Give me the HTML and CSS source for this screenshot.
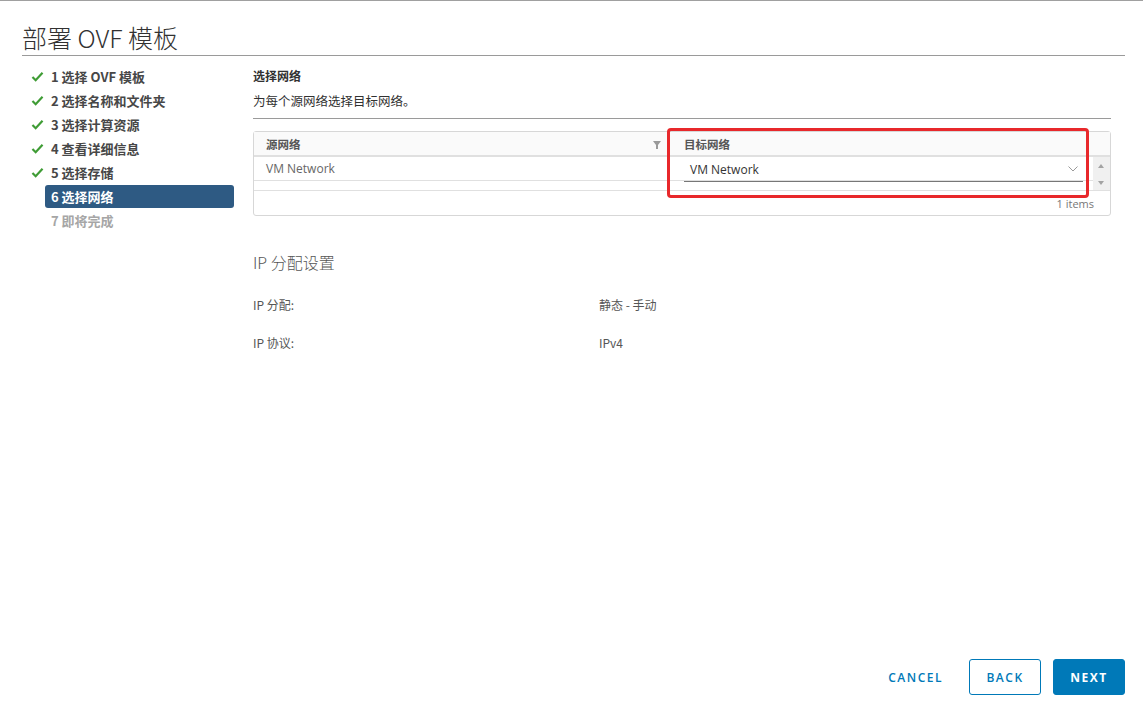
FILE: index.html
```html
<!DOCTYPE html>
<html lang="zh">
<head>
<meta charset="utf-8">
<link rel="stylesheet" href="styles.css">
</head>
<body>
<div class="dialog">
  <header class="title-bar"><h1>部署 OVF 模板</h1></header>
  <div class="body">
    <nav class="steps">
      <div class="step done"><svg class="chk" viewBox="0 0 14 12"><path d="M1.5 6.5 L5 10 L12.5 2" fill="none" stroke="#3f9c35" stroke-width="2.4"/></svg><span>1 选择 OVF 模板</span></div>
      <div class="step done"><svg class="chk" viewBox="0 0 14 12"><path d="M1.5 6.5 L5 10 L12.5 2" fill="none" stroke="#3f9c35" stroke-width="2.4"/></svg><span>2 选择名称和文件夹</span></div>
      <div class="step done"><svg class="chk" viewBox="0 0 14 12"><path d="M1.5 6.5 L5 10 L12.5 2" fill="none" stroke="#3f9c35" stroke-width="2.4"/></svg><span>3 选择计算资源</span></div>
      <div class="step done"><svg class="chk" viewBox="0 0 14 12"><path d="M1.5 6.5 L5 10 L12.5 2" fill="none" stroke="#3f9c35" stroke-width="2.4"/></svg><span>4 查看详细信息</span></div>
      <div class="step done"><svg class="chk" viewBox="0 0 14 12"><path d="M1.5 6.5 L5 10 L12.5 2" fill="none" stroke="#3f9c35" stroke-width="2.4"/></svg><span>5 选择存储</span></div>
      <div class="step active"><span>6 选择网络</span></div>
      <div class="step todo"><span>7 即将完成</span></div>
    </nav>
    <main class="content">
      <div class="sec-head">
        <div class="sec-title">选择网络</div>
        <div class="sec-desc">为每个源网络选择目标网络。</div>
      </div>
      <div class="grid-wrap">
        <div class="grid">
          <div class="grid-head">
            <div class="col col-src">源网络<svg class="filter" viewBox="0 0 8 8"><path d="M0 0 H8 L5 4 V8 H3 V4 Z" fill="#9a9a9a"/></svg></div>
            <div class="col col-dst">目标网络</div>
          </div>
          <div class="grid-bodywrap">
            <div class="grid-rows">
              <div class="grid-row">
                <div class="col col-src cell">VM Network</div>
                <div class="col col-dst cell">
                  <div class="select"><span>VM Network</span><svg class="caret" viewBox="0 0 10 6"><path d="M0.5 0.5 L5 5 L9.5 0.5" fill="none" stroke="#9a9a9a" stroke-width="1"/></svg></div>
                </div>
              </div>
              <div class="grid-spacer"></div>
            </div>
            <div class="scrollbar"><span class="arrow up"></span><span class="arrow down"></span></div>
          </div>
          <div class="grid-foot">1 items</div>
        </div>
        <div class="highlight"></div>
      </div>
      <h2 class="ip-title">IP 分配设置</h2>
      <div class="kv">
        <div class="k">IP 分配:</div><div class="v">静态 - 手动</div>
        <div class="k">IP 协议:</div><div class="v">IPv4</div>
      </div>
    </main>
  </div>
  <footer class="actions">
    <button class="btn btn-link">CANCEL</button>
    <button class="btn btn-outline">BACK</button>
    <button class="btn btn-primary">NEXT</button>
  </footer>
</div>
</body>
</html>
```
FILE: styles.css
```css
* { box-sizing: border-box; }
html, body { margin: 0; padding: 0; }
body {
  width: 1143px;
  height: 713px;
  overflow: hidden;
  background: #fff;
  font-family: "Noto Sans CJK SC", "Open Sans", sans-serif;
  color: #565656;
}
.dialog {
  width: 1143px;
  height: 713px;
  border-top: 1px solid #a0a0a0;
  display: flex;
  flex-direction: column;
  padding: 0 18px 0 22px;
}
.title-bar {
  border-bottom: 1px solid #9a9a9a;
  padding-top: 20px;
  height: 55px;
}
.title-bar h1 {
  margin: 0;
  font-weight: 300;
  font-size: 25px;
  line-height: 32px;
  color: #313131;
  font-family: "Noto Sans CJK SC", "Open Sans", sans-serif;
}
.body {
  display: flex;
  flex: 1;
  padding-top: 8px;
}
.steps {
  width: 212px;
  padding-left: 8px;
  display: flex;
  flex-direction: column;
}
.step {
  height: 24px;
  display: flex;
  align-items: center;
  font-size: 13px;
  font-weight: 700;
  color: #474747;
  padding-left: 21px;
  position: relative;
}
.step.done .chk {
  position: absolute;
  left: 1px;
  top: 7px;
  width: 13px;
  height: 11px;
}
.step.active {
  background: #2e5a83;
  color: #fff;
  border-radius: 3px;
  margin-left: 15px;
  padding-left: 6px;
  height: 23px;
  margin-top: 1px;
  width: 189px;
}
.step.todo { color: #a6a6a6; }
.content {
  flex: 1;
  padding-left: 19px;
  padding-right: 14px;
}
.sec-head {
  border-bottom: 1px solid #9a9a9a;
  padding-top: 3px;
  height: 55px;
}
.sec-title {
  font-size: 12px;
  font-weight: 700;
  color: #313131;
  line-height: 18px;
}
.sec-desc {
  font-size: 12.5px;
  color: #313131;
  line-height: 18px;
  margin-top: 7px;
}
.grid-wrap {
  position: relative;
  margin-top: 12px;
}
.grid {
  border: 1px solid #d7d7d7;
  border-radius: 3px;
  height: 85px;
  display: flex;
  flex-direction: column;
}
.grid-head {
  display: flex;
  height: 25px;
  background: #fafafa;
  border-bottom: 2px solid #e0e0e0;
}
.col {
  font-size: 12px;
  display: flex;
  align-items: center;
}
.grid-head .col {
  font-weight: 700;
  color: #565656;
  font-size: 11.5px;
}
.col-src {
  width: 414px;
  padding-left: 12px;
  padding-right: 6px;
  position: relative;
}
.grid-head .col-src { border-right: 1px solid #e0e0e0; }
.filter {
  position: absolute;
  right: 6px;
  top: 9px;
  width: 8px;
  height: 8px;
}
.col-dst {
  flex: 1;
  padding-left: 16px;
}
.grid-bodywrap {
  display: flex;
  height: 34px;
  border-bottom: 1px solid #e0e0e0;
}
.grid-rows { flex: 1; display: flex; flex-direction: column; }
.grid-row {
  display: flex;
  height: 24px;
  border-bottom: 1px solid #e0e0e0;
}
.cell { color: #666; font-family: "Open Sans", "Noto Sans CJK SC", sans-serif; font-size: 12px; }
.grid-row .col-dst { padding-left: 16px; padding-right: 10px; align-items: flex-start; }
.select {
  flex: 1;
  height: 25px;
  border-bottom: 1px solid #777;
  display: flex;
  align-items: center;
  justify-content: space-between;
  padding-left: 6px;
  padding-right: 5px;
  color: #333;
}
.caret { width: 10px; height: 6px; }
.scrollbar {
  width: 17px;
  background: #f0f0f0;
  position: relative;
}
.arrow {
  position: absolute;
  left: 5px;
  width: 0; height: 0;
  border-left: 3.5px solid transparent;
  border-right: 3.5px solid transparent;
}
.arrow.up { top: 7px; border-bottom: 4px solid #a3a3a3; }
.arrow.down { top: 24px; border-top: 4px solid #a3a3a3; }
.grid-foot {
  flex: 1;
  display: flex;
  align-items: center;
  justify-content: flex-end;
  padding-right: 16px;
  font-size: 11px;
  color: #777;
  font-family: "Open Sans", sans-serif;
}
.highlight {
  position: absolute;
  left: 414px;
  top: -3px;
  width: 422px;
  height: 70px;
  border: 3px solid #e8282b;
  border-radius: 4px;
  pointer-events: none;
}
.ip-title {
  margin: 34px 0 0 0;
  font-size: 16px;
  font-weight: 300;
  color: #565656;
  line-height: 24px;
}
.kv {
  display: grid;
  grid-template-columns: 346px 1fr;
  row-gap: 20px;
  margin-top: 22px;
  font-size: 12px;
  line-height: 18px;
  color: #565656;
}
.actions {
  height: 70px;
  display: flex;
  justify-content: flex-end;
  align-items: flex-start;
  padding-top: 16px;
}
.btn {
  font-family: "Open Sans", sans-serif;
  font-size: 12px;
  font-weight: 600;
  letter-spacing: 1.5px;
  height: 36px;
  width: 72px;
  border-radius: 3px;
  padding: 0;
  cursor: pointer;
}
.btn-link { background: none; border: none; color: #0079b8; width: auto; margin-right: 26px; }
.btn-outline { background: #fff; border: 1px solid #0079b8; color: #0079b8; margin-right: 12px; }
.btn-primary { background: #0079b8; border: 1px solid #0079b8; color: #fff; font-weight: 700; }
```
